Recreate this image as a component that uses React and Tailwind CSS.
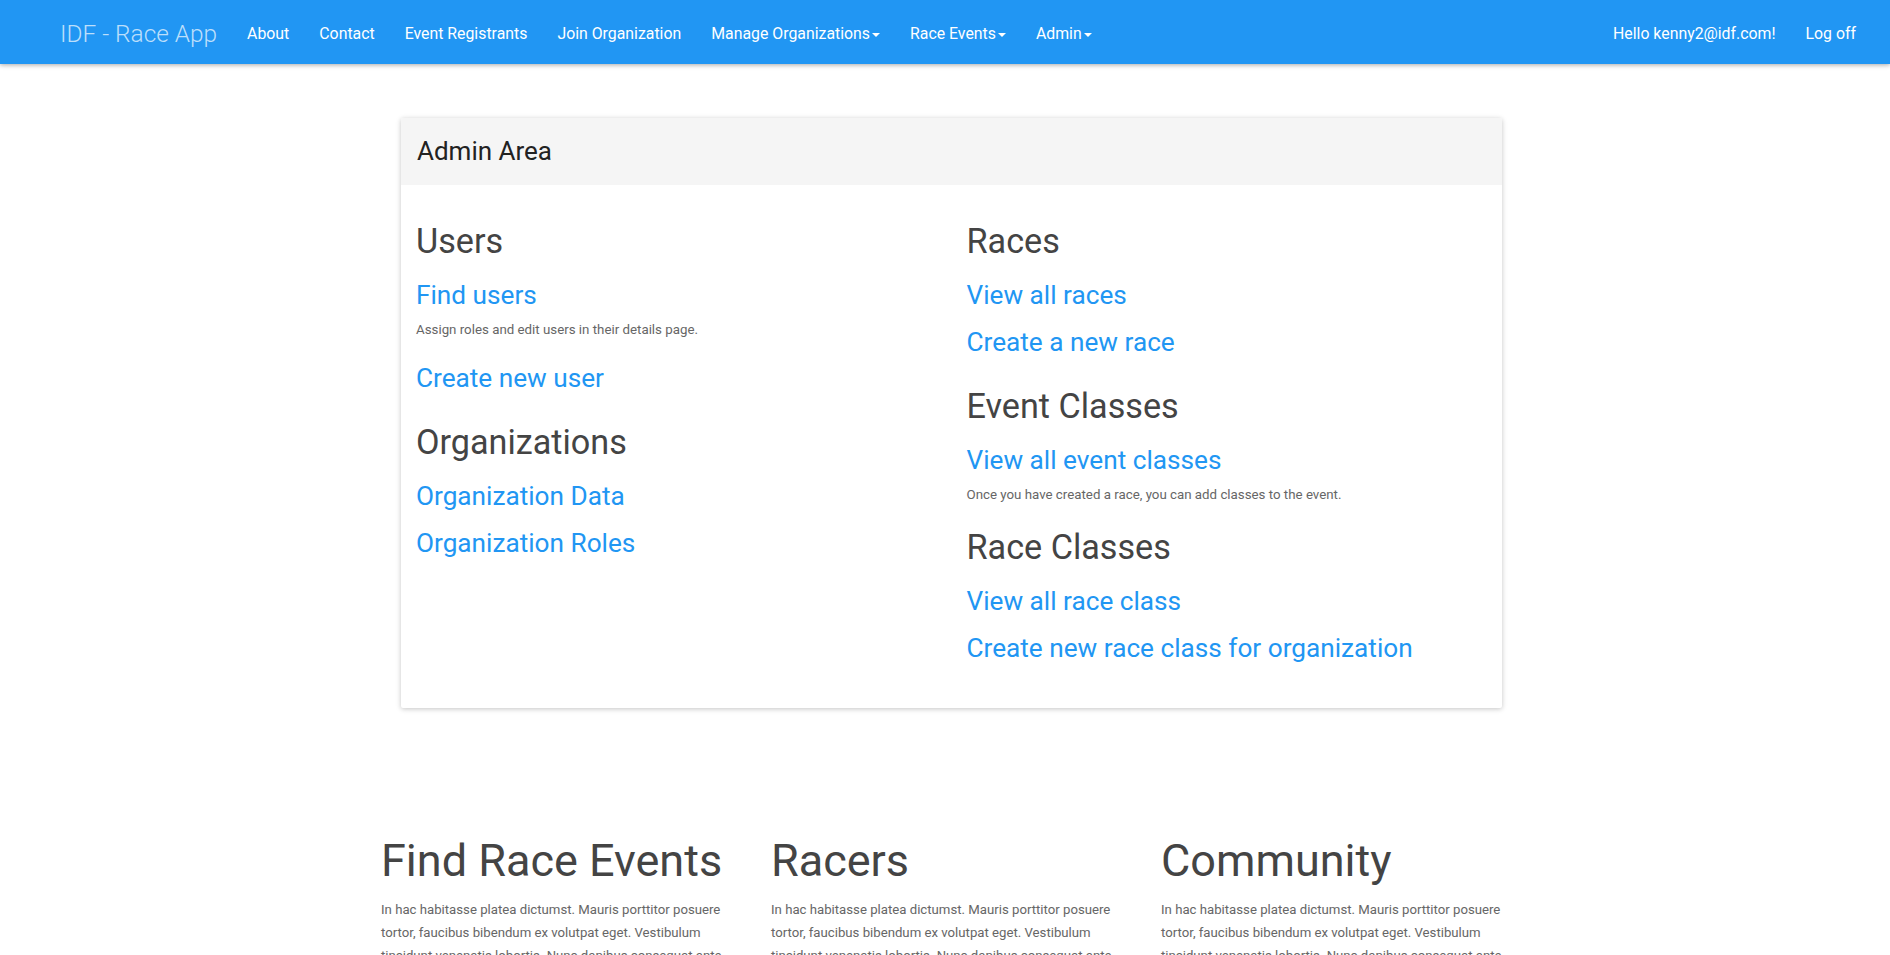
import React from "react";

const navLinks = [
  { label: "About" },
  { label: "Contact" },
  { label: "Event Registrants" },
  { label: "Join Organization" },
  { label: "Manage Organizations", dropdown: true },
  { label: "Race Events", dropdown: true },
  { label: "Admin", dropdown: true },
];

const lorem =
  "In hac habitasse platea dictumst. Mauris porttitor posuere tortor, faucibus bibendum ex volutpat eget. Vestibulum tincidunt venenatis lobortis. Nunc dapibus consequat ante sollicitudin vestibulum nisi finibus vel. Aliquam erat volutpat. Sed aliquet sapien sed justo posuere vehicula.";

function Caret() {
  return (
    <span className="inline-block w-0 h-0 ml-[2px] align-middle border-t-4 border-x-4 border-x-transparent border-t-white" />
  );
}

function Heading({ children, className = "" }) {
  return (
    <h3 className={`text-[34.2px] leading-[37px] h-[37px] text-[#444] font-normal ${className}`}>
      {children}
    </h3>
  );
}

function LinkItem({ children, className = "" }) {
  return (
    <a href="#" className={`block text-[26.2px] leading-[29px] h-[29px] text-[#2196f3] ${className}`}>
      {children}
    </a>
  );
}

function Note({ children, className = "" }) {
  return <p className={`text-[13.3px] leading-[24px] h-[24px] text-[#666] ${className}`}>{children}</p>;
}

export default function App() {
  return (
    <div className="min-h-screen bg-white font-['Roboto',sans-serif]">
      {/* Navbar */}
      <header className="h-16 bg-[#2196f3] flex items-center justify-between pt-[4px] shadow-[0_1px_6px_rgba(0,0,0,0.12),0_1px_4px_rgba(0,0,0,0.24)] relative z-10">
        <div className="flex items-center">
          <a href="#" className="ml-[60px] text-[24.4px] font-light text-[#bcdffb]">
            IDF - Race App
          </a>
          <nav className="flex items-center gap-[30px] ml-[30px]">
            {navLinks.map((l) => (
              <a key={l.label} href="#" className="text-[15.85px] text-white">
                {l.label}
                {l.dropdown && <Caret />}
              </a>
            ))}
          </nav>
        </div>
        <div className="flex items-center gap-[30px] mr-[34px]">
          <a href="#" className="text-[15.85px] text-white">Hello kenny2@idf.com!</a>
          <a href="#" className="text-[15.85px] text-white">Log off</a>
        </div>
      </header>

      <main className="w-[1170px] mx-auto">
        {/* Admin panel */}
        <section className="mt-[54px] ml-[41px] w-[1101px] bg-white rounded-[2px] shadow-[0_1px_6px_rgba(0,0,0,0.12),0_1px_4px_rgba(0,0,0,0.12)]">
          <div className="h-[67px] bg-[#f5f5f5] px-4 flex items-center rounded-t-[2px]">
            <h2 className="text-[26px] text-[#222] font-normal">Admin Area</h2>
          </div>
          <div className="grid grid-cols-2 pt-[38px] pb-[45px]">
            <div className="px-[15px]">
              <Heading>Users</Heading>
              <LinkItem className="mt-[21px]">Find users</LinkItem>
              <Note className="mt-[8px]">Assign roles and edit users in their details page.</Note>
              <LinkItem className="mt-[22px]">Create new user</LinkItem>
              <Heading className="mt-[31px]">Organizations</Heading>
              <LinkItem className="mt-[21px]">Organization Data</LinkItem>
              <LinkItem className="mt-[18px]">Organization Roles</LinkItem>
            </div>
            <div className="px-[15px]">
              <Heading>Races</Heading>
              <LinkItem className="mt-[21px]">View all races</LinkItem>
              <LinkItem className="mt-[18px]">Create a new race</LinkItem>
              <Heading className="mt-[31px]">Event Classes</Heading>
              <LinkItem className="mt-[21px]">View all event classes</LinkItem>
              <Note className="mt-[8px]">Once you have created a race, you can add classes to the event.</Note>
              <Heading className="mt-[22px]">Race Classes</Heading>
              <LinkItem className="mt-[21px]">View all race class</LinkItem>
              <LinkItem className="mt-[18px]">Create new race class for organization</LinkItem>
            </div>
          </div>
        </section>

        {/* Feature columns */}
        <section className="grid grid-cols-[390px_390px_390px] mt-[128px] ml-[6px]">
          {["Find Race Events", "Racers", "Community"].map((t) => (
            <div key={t} className="px-[15px]">
              <h1 className="text-[45px] leading-[50px] text-[#444] font-normal">{t}</h1>
              <p className="mt-[12px] text-[13.2px] leading-[23px] text-[#666]">{lorem}</p>
            </div>
          ))}
        </section>
      </main>
    </div>
  );
}
